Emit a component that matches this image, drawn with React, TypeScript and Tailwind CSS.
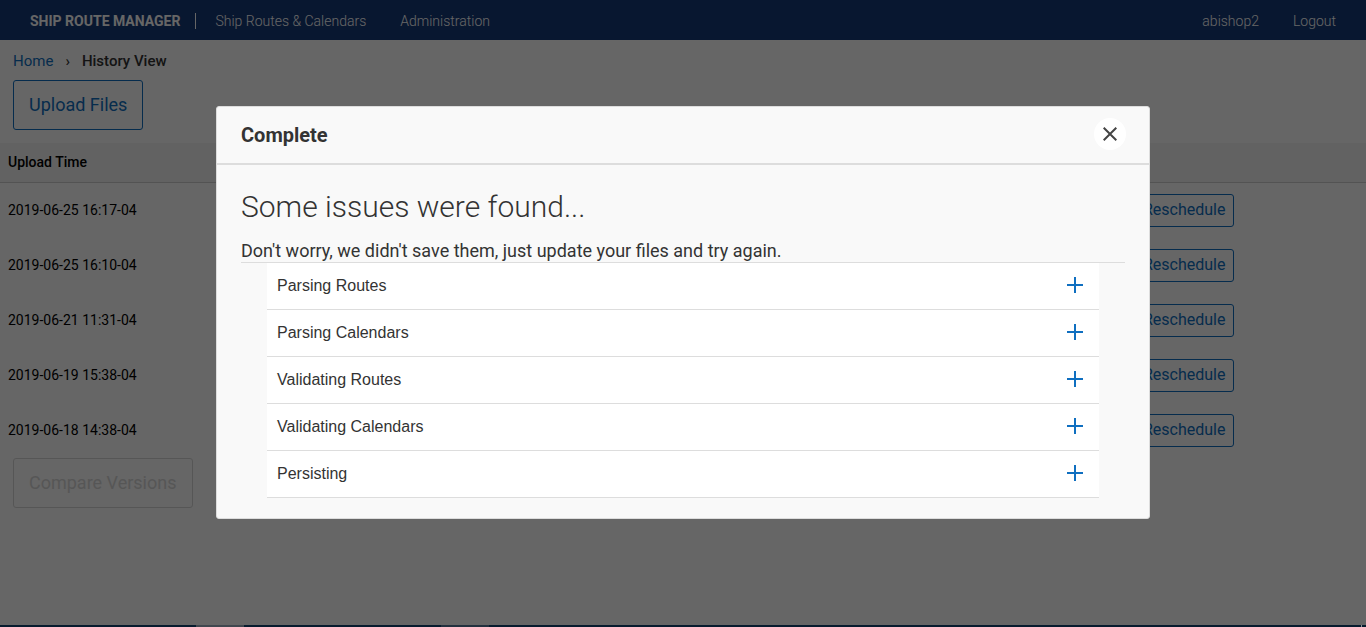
import React from "react";

const uploads = [
  "2019-06-25 16:17-04",
  "2019-06-25 16:10-04",
  "2019-06-21 11:31-04",
  "2019-06-19 15:38-04",
  "2019-06-18 14:38-04",
];

const stages = [
  "Parsing Routes",
  "Parsing Calendars",
  "Validating Routes",
  "Validating Calendars",
  "Persisting",
];

function TopBar() {
  return (
    <header className="flex h-10 items-center justify-between bg-[#163a78] px-[30px] pt-0.5 text-sm text-white">
      <nav className="flex items-center">
        <a href="#" className="border-r border-white pr-[15px] font-bold leading-4">
          SHIP ROUTE MANAGER
        </a>
        <a href="#" className="ml-[19px] font-light">
          Ship Routes &amp; Calendars
        </a>
        <a href="#" className="ml-[34px] font-light">
          Administration
        </a>
      </nav>
      <nav className="flex gap-[34px] font-light">
        <a href="#">abishop2</a>
        <a href="#">Logout</a>
      </nav>
    </header>
  );
}

function HistoryPage() {
  return (
    <main className="flex-1">
      <nav aria-label="Breadcrumb" className="flex h-10 items-center px-[13px] pt-0.5 text-[15px]">
        <a href="#" className="text-[#0f6fc0]">
          Home
        </a>
        <span className="mx-3 font-medium text-[#333]">›</span>
        <span className="font-medium text-[#333]">History View</span>
      </nav>
      <div className="px-[13px] pb-[13px]">
        <button className="h-[50px] rounded-[3px] border border-[#0f6fc0] px-[15px] text-lg text-[#0f6fc0]">
          Upload Files
        </button>
      </div>
      <table className="w-full table-fixed border-collapse text-left text-sm text-black">
        <thead>
          <tr className="h-[39px] border-b border-[#d0d0d0] bg-[#f4f4f4]">
            <th className="px-2 font-medium">Upload Time</th>
            <th className="w-[239px] px-2" aria-label="Actions"></th>
          </tr>
        </thead>
        <tbody>
          {uploads.map((time) => (
            <tr key={time} className="h-[55px]">
              <td className="px-2">{time}</td>
              <td className="px-2 pt-0.5">
                <button className="block h-[33px] rounded-[3px] border border-[#0f6fc0] px-[7px] pb-0.5 text-base text-[#0f6fc0]">
                  Reschedule
                </button>
              </td>
            </tr>
          ))}
        </tbody>
      </table>
      <div className="px-[13px] pt-px">
        <button
          disabled
          className="h-[50px] rounded-[3px] border border-[#d8d8d8] px-[15px] text-lg text-[#d8d8d8]"
        >
          Compare Versions
        </button>
      </div>
    </main>
  );
}

function IssuesDialog() {
  return (
    <section
      role="dialog"
      aria-modal="true"
      aria-labelledby="dialog-title"
      className="w-full max-w-[934px] rounded-[3px] border border-[#ddd] bg-[#f9f9f9] text-[#333]"
    >
      <header className="flex h-[58px] items-center justify-between border-b-2 border-[#ddd] pl-6 pr-[23px]">
        <h2 id="dialog-title" className="text-xl font-bold">
          Complete
        </h2>
        <button
          aria-label="Close"
          className="mb-0.5 flex size-8 items-center justify-center rounded-full bg-white"
        >
          <svg viewBox="0 0 14 14" className="size-3.5" fill="none" stroke="#444" strokeWidth="2">
            <path d="M.7.7l12.6 12.6M13.3.7L.7 13.3" />
          </svg>
        </button>
      </header>
      <div className="px-6 py-5">
        <h3 className="text-3xl font-light leading-11">Some issues were found...</h3>
        <p className="pt-[11px] text-lg leading-[22px]">
          Don't worry, we didn't save them, just update your files and try again.
        </p>
        <div className="border-t border-[#ddd] px-[26px]">
          <ul className="font-['Liberation_Sans',Arial,sans-serif] text-base">
            {stages.map((stage) => (
              <li key={stage} className="border-b border-[#ddd] bg-white">
                <button
                  aria-expanded="false"
                  className="flex h-[46px] w-full items-center justify-between pl-2.5 pr-4"
                >
                  {stage}
                  <svg
                    viewBox="0 0 16 16"
                    className="mb-0.5 size-4"
                    fill="none"
                    stroke="#0f6fc0"
                    strokeWidth="2"
                  >
                    <path d="M8 0v16M0 8h16" />
                  </svg>
                </button>
              </li>
            ))}
          </ul>
        </div>
      </div>
    </section>
  );
}

function TaskStrip() {
  return (
    <footer className="relative z-20 flex h-0.5 bg-[#071b2e]">
      <div className="ml-[196px] w-12 bg-[#40474f]" />
      <div className="ml-[197px] w-12 bg-[#22303e]" />
      <div className="ml-auto mr-1 w-px bg-[#8a9299]" />
    </footer>
  );
}

export default function App() {
  return (
    <div className="flex min-h-screen flex-col bg-white font-[Roboto,sans-serif]">
      <TopBar />
      <HistoryPage />
      <TaskStrip />
      <div className="fixed inset-0 z-10 flex items-center justify-center bg-black/60 pb-0.5">
        <IssuesDialog />
      </div>
    </div>
  );
}
